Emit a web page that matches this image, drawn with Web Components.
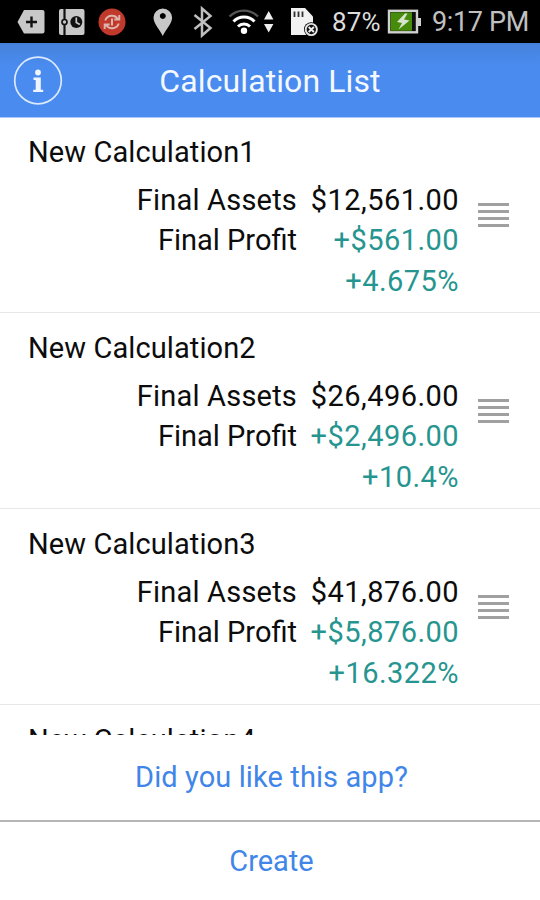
<!DOCTYPE html>
<html lang="en">
<head>
<meta charset="utf-8">
<title>Calculation List</title>
<style>
html, body { margin: 0; height: 100%; }
body { font-family: Roboto, "Noto Sans", sans-serif; font-size: 29px; background: #fff; color: #0c0c0c; overflow: hidden; }
</style>
</head>
<body>
<calc-app></calc-app>
<script>
function define(name, html, setup) {
  const template = document.createElement('template');
  template.innerHTML = html;
  customElements.define(name, class extends HTMLElement {
    constructor() {
      super();
      this.attachShadow({ mode: 'open' }).append(template.content.cloneNode(true));
    }
    connectedCallback() { if (setup) setup(this, this.shadowRoot); }
  });
}

define('status-bar', `
<style>
:host { display: flex; height: 43px; background: #000; color: #c0c0c0; overflow: hidden; }
svg { flex: none; width: 330px; height: 43px; display: block; }
.battery { width: 36px; }
span { font-size: 27px; line-height: 45px; white-space: nowrap; }
.pct { width: 55px; color: #ddd; font-size: 26px; letter-spacing: .1px; padding-left: 2px; box-sizing: border-box; }
.time { margin-left: 11px; letter-spacing: -.35px; }
</style>
<svg viewBox="0 0 330 43">
  <path d="M24 10h18.500q2 0 2 2v19.500q0 2-2 2H24L17.500 22z" fill="#c8c8c8"/>
  <path d="M26 22h11M31.500 16.500v11" stroke="#111" stroke-width="2.400"/>
  <rect x="59" y="9" width="25.500" height="26" rx="2" fill="#c8c8c8"/>
  <path d="M64.500 9v26" stroke="#111" stroke-width="2.200"/>
  <circle cx="64.500" cy="22" r="2.500" fill="#c8c8c8" stroke="#111" stroke-width="1.700"/>
  <circle cx="76.300" cy="22" r="6" fill="#111"/>
  <path d="M76.300 17.500v5l3.500 2" fill="none" stroke="#c8c8c8" stroke-width="1.700"/>
  <circle cx="112" cy="22" r="13.500" fill="#c0392b"/>
  <path d="M105.200 20.500a7.200 7.200 0 0 1 12.600-1.800M118.800 23.500a7.200 7.200 0 0 1-12.600 1.800M119.300 15v4.500h-5M104.700 29v-4.500h5" fill="none" stroke="#ddb5ae" stroke-width="1.900"/>
  <path d="M112 18.500v7" stroke="#ddb5ae" stroke-width="2"/>
  <path fill-rule="evenodd" d="M162.800 36C159.500 29 153.500 23.500 153.500 17.500a9.300 9 0 0 1 18.600 0C172.100 23.500 166 29 162.800 36zM162.800 13a3 3 0 1 0 .01 0z" fill="#c8c8c8"/>
  <path d="M194.500 15l16 13-8.500 7.500V8.500l8.500 7.500-16 13" fill="none" stroke="#bfbfbf" stroke-width="2.500"/>
  <path d="M229.500 16.500a20 20 0 0 1 28.500 0" fill="none" stroke="#555" stroke-width="2.300"/>
  <path d="M233.500 21.500a14.500 14.500 0 0 1 21 0M238 26.500a8.500 8.500 0 0 1 12 0" fill="none" stroke="#fff" stroke-width="3"/>
  <circle cx="244" cy="30.800" r="3.200" fill="#fff"/>
  <path d="M264 19.500h9.400L268.700 11zM264 24h9.400l-4.700 8.500z" fill="#eee"/>
  <path d="M291 8h14l8 8.500V35h-22z" fill="#f2f2f2"/>
  <path d="M294.500 11.500v5.500M298.500 11.500v5.500M302.500 11.500v5.500" stroke="#333" stroke-width="1.800"/>
  <circle cx="311.300" cy="29.500" r="7.300" fill="#000"/>
  <circle cx="311.300" cy="29.500" r="5.600" fill="#111" stroke="#e5e5e5" stroke-width="1.900"/>
  <path d="M308.700 27l5.200 5M313.900 27l-5.200 5" stroke="#eee" stroke-width="1.900"/>
</svg>
<span class="pct">87%</span>
<svg class="battery" viewBox="385 0 36 43">
  <rect x="389" y="10.800" width="28" height="21.500" fill="#111" stroke="#d0d0d0" stroke-width="2.400"/>
  <rect x="390.500" y="12.300" width="21.500" height="18.500" fill="#468c0a"/>
  <path d="M418 18h3v8h-3z" fill="#d0d0d0"/>
  <path d="M405 13.500L397 22l5 1-3.500 6.500 11-9-5.500-1 3.500-6z" fill="#d9e4cf"/>
</svg>
<span class="time">9:17 PM</span>`);

define('title-bar', `
<style>
:host { display: grid; grid-template-columns: 76px 1fr 76px; align-items: center; height: 75px; background: linear-gradient(#4682dc, #498bee 30%); color: #f4f8ff; border-bottom: 1px solid #a9c8f7; box-sizing: border-box; }
svg { display: block; width: 50px; height: 50px; margin: 1px 0 0 12.500px; }
h1 { margin: 2px 0 0; font: inherit; font-size: 32px; line-height: 40px; letter-spacing: .1px; text-align: center; white-space: nowrap; }
</style>
<svg viewBox="0 0 50 50">
  <circle cx="25" cy="24.500" r="23.300" fill="none" stroke="#dce9ff" stroke-width="1.700"/>
  <circle cx="25" cy="16.500" r="2.900" fill="#eff5ff"/>
  <path d="M20.500 21.500h7.300v12.300h2.400V36h-10v-2.200h2.500v-9.900h-2.200z" fill="#eff5ff"/>
</svg>
<h1><slot></slot></h1>`);

define('drag-handle', `
<style>
:host { display: flex; flex-direction: column; justify-content: space-between; width: 31px; height: 24px; }
i { height: 3px; background: #a0a0a0; }
</style><i></i><i></i><i></i><i></i>`);

define('calc-row', `
<style>
:host { display: block; box-sizing: border-box; flex: none; height: 196px; padding: 15px 0 0 28px; border-bottom: 1px solid #e8e8e8; line-height: 40.500px; white-space: nowrap; }
:host(:first-of-type) { height: 195px; padding-top: 14px; }
.name { letter-spacing: .1px; }
.body { display: grid; grid-template-columns: 269px 162px 1fr; margin-top: 7px; }
.body[hidden] { display: none; }
.labels, .values { text-align: right; }
.labels div:first-child { letter-spacing: .2px; }
.values { letter-spacing: .45px; }
.gain { color: #26958f; }
drag-handle { margin: 23.500px 0 0 18.500px; }
</style>
<div class="name"></div>
<div class="body">
  <div class="labels"><div>Final Assets</div><div>Final Profit</div></div>
  <div class="values"><div class="assets"></div><div class="gain profit"></div><div class="gain rate"></div></div>
  <drag-handle></drag-handle>
</div>`, (host, root) => {
  for (const key of ['name', 'assets', 'profit', 'rate'])
    root.querySelector('.' + key).textContent = host.getAttribute(key) || '';
  root.querySelector('.body').hidden = !host.hasAttribute('assets');
});

define('link-button', `
<style>
:host { display: flex; align-items: center; justify-content: center; color: #3f86e8; box-sizing: border-box; }
button { all: unset; cursor: pointer; white-space: nowrap; }
</style><button><slot></slot></button>`);

define('calc-app', `
<style>
:host { display: flex; flex-direction: column; width: 540px; height: 900px; }
status-bar, title-bar { flex: none; }
main { display: flex; flex-direction: column; height: 617px; overflow: hidden; flex: none; }
.rate-app { height: 87px; border-bottom: 2px solid #b5b5b5; letter-spacing: .1px; padding: 0 0 2px 3px; }
.create { height: 78px; padding-left: 3px; }
</style>
<status-bar></status-bar>
<title-bar>Calculation List</title-bar>
<main>
  <calc-row name="New Calculation1" assets="$12,561.00" profit="+$561.00" rate="+4.675%"></calc-row>
  <calc-row name="New Calculation2" assets="$26,496.00" profit="+$2,496.00" rate="+10.4%"></calc-row>
  <calc-row name="New Calculation3" assets="$41,876.00" profit="+$5,876.00" rate="+16.322%"></calc-row>
  <calc-row name="New Calculation4"></calc-row>
</main>
<link-button class="rate-app">Did you like this app?</link-button>
<link-button class="create">Create</link-button>`);
</script>
</body>
</html>
